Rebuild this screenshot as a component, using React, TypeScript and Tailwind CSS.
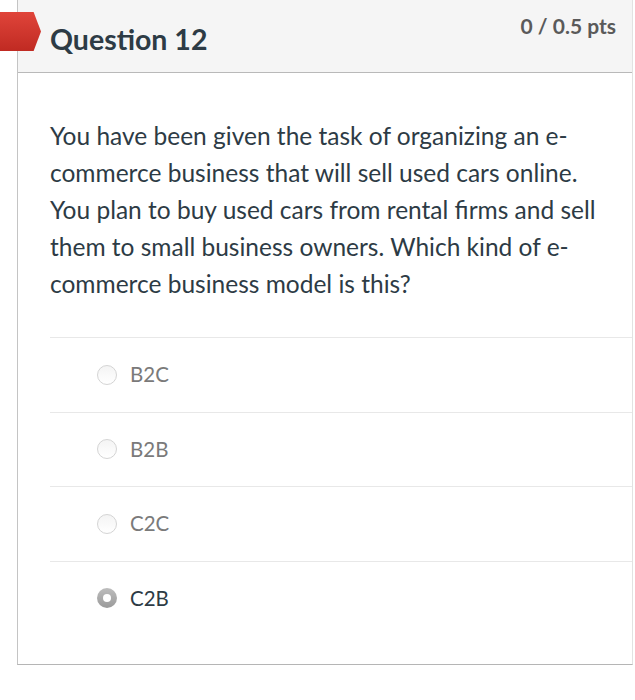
import React from 'react';

const options = [
  { id: 'b2c', label: 'B2C', selected: false },
  { id: 'b2b', label: 'B2B', selected: false },
  { id: 'c2c', label: 'C2C', selected: false },
  { id: 'c2b', label: 'C2B', selected: true },
];

function Radio({ selected }: { selected: boolean }) {
  if (selected) {
    return (
      <span className="w-[20px] h-[20px] rounded-full bg-gradient-to-b from-[#bdbdbd] to-[#9a9a9a] flex items-center justify-center shrink-0">
        <span className="w-[8px] h-[8px] rounded-full bg-white" />
      </span>
    );
  }
  return (
    <span className="w-[20px] h-[20px] rounded-full border border-[#d4d4d4] bg-gradient-to-b from-[#f4f4f4] to-white shrink-0" />
  );
}

export default function App() {
  return (
    <div className="w-[635px] h-[700px] bg-white relative font-['Lato','Noto_Sans',sans-serif]">
      {/* Question flag */}
      <div
        className="absolute left-0 top-[12px] w-[41px] h-[39px] bg-gradient-to-b from-[#e0443a] to-[#c02a22] z-10"
        style={{ clipPath: 'polygon(0 0, 82% 0, 100% 50%, 82% 100%, 0 100%)' }}
      />

      <div className="ml-[17px] w-[616px] border-l border-b border-r border-l-[#c4c4c4] border-b-[#b5b5b5] border-r-[#e2e2e2]">
        {/* Header */}
        <div className="h-[73px] bg-[#f5f5f5] border-b border-[#b9b9b9] flex justify-between pl-[32px] pr-[16px]">
          <h2 className="text-[28.5px] font-bold text-[#2d3b45] mt-[20px] leading-[38px]">Question 12</h2>
          <div className="text-[21px] font-bold text-[#5a5a5a] mt-[11px] leading-[30px]">0 / 0.5 pts</div>
        </div>

        {/* Body */}
        <div className="pl-[32px] pt-[44px]">
          <p className="text-[24.5px] leading-[37px] text-[#2d3b45] w-[560px]">
            You have been given the task of organizing an e-commerce business that will sell used cars online. You plan to buy used cars from rental firms and sell them to small business owners. Which kind of e-commerce business model is this?
          </p>

          <div className="mt-[35px] pb-[29px]">
            {options.map((o) => (
              <div key={o.id} className="border-t border-[#e8e8e8] h-[74.5px] flex items-center pl-[47px] gap-[13px]">
                <Radio selected={o.selected} />
                <span className={`text-[20.5px] ${o.selected ? 'text-[#2d3b45]' : 'text-[#7a7a7a]'}`}>{o.label}</span>
              </div>
            ))}
          </div>
        </div>
      </div>
    </div>
  );
}
